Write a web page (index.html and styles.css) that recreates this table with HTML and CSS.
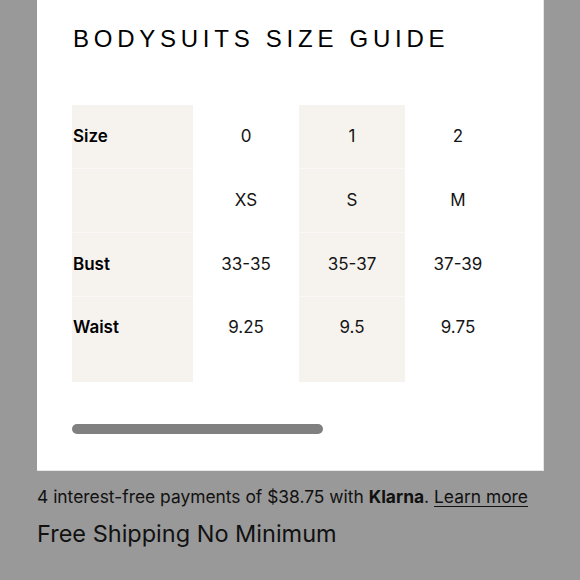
FILE: index.html
```html
<!DOCTYPE html>
<html>
<head>
<meta charset="utf-8">
<link rel="stylesheet" href="styles.css">
</head>
<body>
<div class="panel">
  <h1 class="title">BODYSUITS SIZE GUIDE</h1>
  <div class="table">
    <div class="cell label shade">Size</div>
    <div class="cell">0</div>
    <div class="cell shade">1</div>
    <div class="cell">2</div>

    <div class="cell label shade"></div>
    <div class="cell">XS</div>
    <div class="cell shade">S</div>
    <div class="cell">M</div>

    <div class="cell label shade">Bust</div>
    <div class="cell">33-35</div>
    <div class="cell shade">35-37</div>
    <div class="cell">37-39</div>

    <div class="cell label shade last">Waist</div>
    <div class="cell last">9.25</div>
    <div class="cell shade last">9.5</div>
    <div class="cell last">9.75</div>
  </div>
  <div class="scrollbar"></div>
</div>
<div class="info">
  <p class="klarna">4 interest-free payments of $38.75 with <b>Klarna</b>. <a href="#">Learn more</a></p>
  <p class="shipping">Free Shipping No Minimum</p>
</div>
</body>
</html>
```

FILE: styles.css
```css
html, body {
  margin: 0;
  padding: 0;
  background: #999999;
}
body {
  font-family: Inter, "Noto Sans", sans-serif;
  color: #111;
  width: 580px;
  height: 580px;
  overflow: hidden;
}
.panel {
  margin-left: 37px;
  width: 507px;
  height: 471px;
  box-sizing: border-box;
  padding: 25px 0 0 35px;
  background: #fff;
  border-right: 1px solid #e6e6e6;
  border-bottom: 1px solid #e6e6e6;
}
.title {
  margin: 0 0 52px 1px;
  font-family: "Liberation Sans", Arial, sans-serif;
  font-weight: 400;
  font-size: 24px;
  line-height: 28px;
  letter-spacing: 4.75px;
  color: #000;
}
.table {
  display: grid;
  grid-template-columns: 121px 106px 106px 106px;
  grid-auto-rows: auto;
}
.cell {
  height: 64px;
  box-sizing: border-box;
  display: flex;
  align-items: center;
  justify-content: center;
  padding-bottom: 2px;
  font-size: 17px;
  color: #151515;
  border-bottom: 1px solid transparent;
}
.cell:nth-child(4n+2), .cell:nth-child(4n+4) {
  border-bottom-color: #fff;
}
.shade {
  background: #f6f3ef;
  border-bottom: 1px solid #faf8f6;
}
.label {
  justify-content: flex-start;
  padding-left: 1px;
  font-weight: 600;
  color: #000;
}
.cell.last {
  height: 85px;
  padding-bottom: 25px;
  border-bottom: none;
}
.scrollbar {
  margin-top: 42px;
  width: 251px;
  height: 10px;
  border-radius: 5px;
  background: #808080;
}
.info {
  padding: 15px 0 0 37px;
}
.klarna {
  margin: 0;
  font-size: 17.4px;
  line-height: 22px;
  color: #111;
}
.klarna b {
  font-weight: 700;
}
.klarna a {
  color: #111;
  text-decoration: underline;
  text-underline-offset: 3px;
}
.shipping {
  margin: 12px 0 0;
  font-size: 23.5px;
  line-height: 28px;
  color: #111;
}
```
